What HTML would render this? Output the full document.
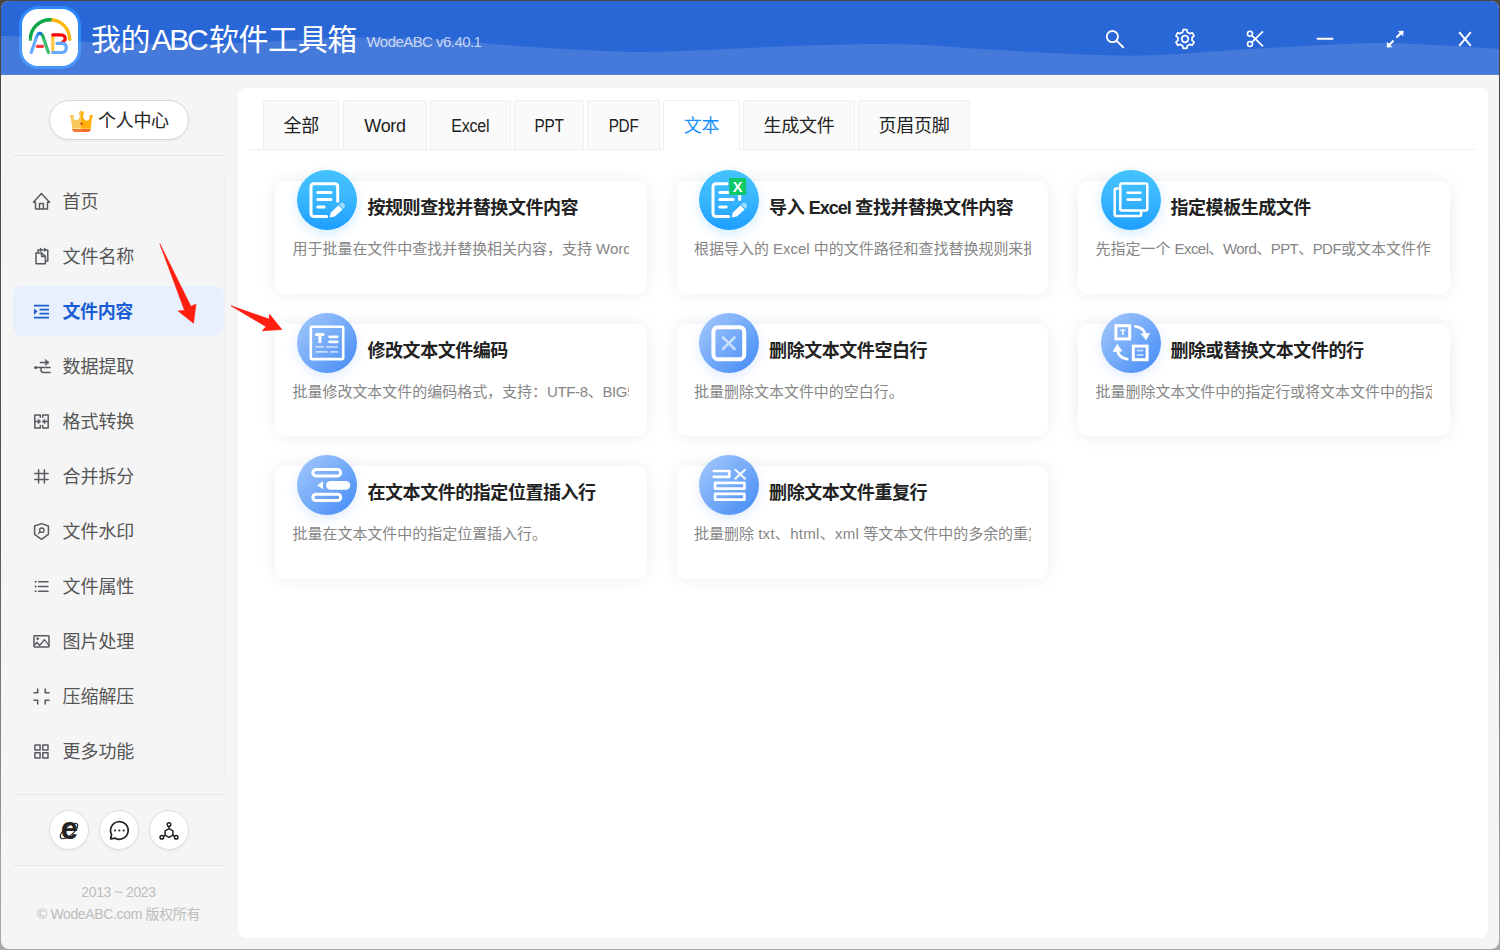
<!DOCTYPE html>
<html lang="zh-CN">
<head>
<meta charset="utf-8">
<title>我的ABC软件工具箱</title>
<style>
*{box-sizing:border-box;margin:0;padding:0}
html,body{width:1500px;height:950px;overflow:hidden}
body{background:linear-gradient(180deg,#4a4740 0%,#55534e 55%,#a2a2a2 92%,#aaa 100%);font-family:"Liberation Sans","Noto Sans CJK SC",sans-serif;position:relative;color:#222}
.win{position:absolute;left:1px;top:1px;width:1498px;height:948px;border-radius:8px;overflow:hidden;background:#f5f5f5}
.in{position:absolute;left:-1px;top:-1px;width:1500px;height:950px}
.abs{position:absolute}
/* header */
.hdr{position:absolute;left:0;top:0;width:1500px;height:74.5px;background:#2966d6;border-bottom:1px solid #336dd8}
.hdr svg.wave{position:absolute;left:0;top:0;pointer-events:none}
.logo{position:absolute;left:19px;top:6px;width:62px;height:63px;border-radius:19px;background:#2e88fc}
.logo i{position:absolute;left:3px;top:3px;right:3px;bottom:3px;border-radius:16px;background:#fff}
.title{position:absolute;left:91px;top:20px;font-size:30px;line-height:40px;color:#fff;white-space:nowrap;letter-spacing:-0.4px}
.ver{position:absolute;left:366.5px;top:32.2px;font-size:15px;line-height:20px;color:#c3d3f3;white-space:nowrap;letter-spacing:-0.55px}
.hi{position:absolute}
/* sidebar */
.pc{position:absolute;left:49px;top:100px;width:140px;height:40px;border:1px solid #d6d6d6;border-radius:20px;background:#fff;box-shadow:0 2px 2px rgba(0,0,0,.03)}
.pc span{position:absolute;left:48px;top:1px;font-size:18px;line-height:38px;color:#222;white-space:nowrap;letter-spacing:-0.3px}
.sep{position:absolute;left:13px;width:212px;height:1px;background:#e6e6e6}
.vline{position:absolute;left:224px;top:171px;width:1px;height:607px;background:#efefef}
.mi{position:absolute;left:13px;width:211px;height:50px;border-radius:9px}
.mi.on{background:#e8f0fe}
.mi span{position:absolute;left:49.5px;top:1.3px;font-size:18px;line-height:50px;color:#555;white-space:nowrap;letter-spacing:-0.05px}
.mi.on span{color:#1a5cd2;font-weight:700;letter-spacing:-0.4px}
.mi svg{position:absolute;left:18px;top:15px;width:20px;height:20px;overflow:visible}
.rb{position:absolute;top:810px;width:40px;height:40px;border-radius:50%;background:#fff;border:1px solid #ddd;box-shadow:0 2px 3px rgba(0,0,0,.04)}
.rb svg{position:absolute;left:-1px;top:-1px;width:40px;height:40px;overflow:visible}
.cp{position:absolute;left:13px;width:211px;text-align:center;font-size:14px;line-height:20px;color:#bdbdbd;white-space:nowrap;letter-spacing:-0.35px}
/* main */
.panel{position:absolute;left:238px;top:88px;width:1250px;height:850px;border-radius:8px;background:#fff}
.tabline{position:absolute;left:250px;top:149px;width:1225px;height:1px;background:#eee}
.tab{position:absolute;top:100px;height:50px;border:1px solid #f0f0f0;border-bottom:1px solid #eee;background:#fafafa;border-radius:3px 3px 0 0;font-size:18px;line-height:50px;text-align:center;color:#222;white-space:nowrap;letter-spacing:-0.3px}
.tab.on{background:#fff;color:#1890ff;border-bottom-color:#fff}
.card{position:absolute;width:372px;height:113px;border-radius:10px;background:#fff;box-shadow:0 0 18px rgba(0,0,0,.075)}
.ic{position:absolute;left:22.3px;top:-11px;width:60px;height:60px;border-radius:50%}
.ic.a{background:linear-gradient(180deg,#43c2ff 0%,#3cb9ff 40%,#1e9fff 100%);box-shadow:0 4px 12px rgba(40,165,255,.2)}
.ic.b{background:linear-gradient(135deg,#a4c9fb 0%,#7aaef9 45%,#4189f6 100%);box-shadow:0 4px 12px rgba(80,145,247,.17)}
.ic svg{position:absolute;left:0;top:0;width:60px;height:60px;overflow:visible}
.ct{position:absolute;left:92.5px;top:13px;font-size:18px;line-height:28px;font-weight:700;color:#222;white-space:nowrap;letter-spacing:-0.45px}
.cd{position:absolute;left:17.5px;top:57px;width:336.5px;overflow:hidden;font-size:15px;line-height:22px;color:#868686;white-space:nowrap;letter-spacing:-0.03px}
.title b{font-weight:400;letter-spacing:-2.2px;margin:0 2.4px 0 1.2px}
.tab s{display:inline-block;text-decoration:none}
.ct s{text-decoration:none;letter-spacing:-1px}
.cd s{text-decoration:none}
</style>
</head>
<body>
<div class="win"><div class="in">

<!-- HEADER -->
<div class="hdr">
<div class="logo"><i></i>
<svg class="abs" style="left:0;top:0" width="62" height="63" viewBox="0 0 62 63" fill="none" stroke-width="3.2" stroke-linecap="round" stroke-linejoin="round">
<path d="M11.4,33.3 A19.6,19.6 0 0 1 32.4,13.75" stroke="#0aa845" stroke-width="3.4"/>
<path d="M32.4,13.75 A19.6,19.6 0 0 1 50.6,33.3" stroke="#fdb70b" stroke-width="3.4" stroke-linecap="butt"/><path d="M50.6,33.2 V33.3" stroke="#fdb70b" stroke-width="3.4"/>
<path d="M12.2,46.6 L17.7,30.4 Q18.6,28.2 20,27.5" stroke="#4a9cff"/>
<path d="M29.4,46.6 L23.9,30.2 Q23,28.2 21.8,27.6" stroke="#1fb35a"/>
<path d="M20,27.5 Q20.9,27.1 21.8,27.6" stroke="#1a74cf"/>
<path d="M18.3,40.3 L23.6,40.3" stroke="#fb1f1f"/>
<path d="M33.8,30 L33.8,46.2" stroke="#fdc02a"/>
<path d="M33.8,28.8 L41.3,28.8 Q46.2,29 46.2,32.6 Q46.2,35.4 43.4,36" stroke="#fa0505"/>
<path d="M38,37.4 L43.2,37.4 Q47.3,37.8 47.3,41.8 Q47.3,46.2 43,46.5 L33.8,46.5" stroke="#4a9cff"/>
</svg>
</div>
<svg class="abs" style="left:0;top:0" width="1500" height="75" viewBox="0 0 1500 75" fill="none" stroke="#fff" stroke-width="1.8" stroke-linecap="round" stroke-linejoin="round">
<circle cx="1112.4" cy="36.6" r="5.6"/><path d="M1116.6,40.9 L1123.2,47.2" stroke-width="2"/>
<path d="M1182.67,32.19 L1183.19,29.57 L1186.81,29.57 L1187.33,32.19 L1189.73,33.57 L1192.26,32.72 L1194.07,35.86 L1192.07,37.61 L1192.07,40.39 L1194.07,42.14 L1192.26,45.28 L1189.73,44.43 L1187.33,45.81 L1186.81,48.43 L1183.19,48.43 L1182.67,45.81 L1180.27,44.43 L1177.74,45.28 L1175.93,42.14 L1177.93,40.39 L1177.93,37.61 L1175.93,35.86 L1177.74,32.72 L1180.27,33.57 Z" stroke-width="1.7"/><circle cx="1185" cy="39" r="3.3" stroke-width="1.7"/>
<circle cx="1250" cy="33.8" r="2.5" stroke-width="1.6"/><circle cx="1250" cy="44" r="2.5" stroke-width="1.6"/><path d="M1252,35.6 L1263,46.4 M1252,42.2 L1263,31.4" stroke-width="1.7" stroke-linecap="butt"/>
<path d="M1316.8,38.8 H1333.2" stroke-width="2" stroke-linecap="butt"/>
<path d="M1396.4,37.6 L1400.6,33.4 M1393.6,40.5 L1389.4,44.7" stroke-width="2.1" stroke-linecap="butt"/>
<path d="M1403.1,31 L1398.3,31.3 L1402.7,35.8 Z M1387,47 L1387.3,42.2 L1391.8,46.7 Z" fill="#fff" stroke-width="0.5"/>
<path d="M1459.2,32.2 L1470.8,45.8 M1470.8,32.2 L1459.2,45.8" stroke-width="1.9" stroke-linecap="butt"/>
</svg>
<div class="title">我的<b>ABC</b>软件工具箱</div>
<div class="ver">WodeABC v6.40.1</div>
<svg class="wave" width="1500" height="76" viewBox="0 0 1500 76"><path d="M0.0,36.0 C3.3,36.1 5.8,35.8 20.0,36.7 C34.2,37.7 63.3,40.5 85.0,41.7 C106.7,42.9 132.5,43.4 150.0,43.9 C167.5,44.4 175.7,44.7 190.0,44.6 C204.3,44.5 218.2,44.1 236.0,43.3 C253.8,42.5 276.3,40.9 297.0,39.9 C317.7,38.9 337.3,37.5 360.0,37.4 C382.7,37.3 411.8,38.5 433.0,39.5 C454.2,40.5 469.2,42.1 487.0,43.5 C504.8,44.9 521.2,46.4 540.0,47.6 C558.8,48.8 583.3,50.1 600.0,50.8 C616.7,51.5 623.3,52.1 640.0,52.0 C656.7,51.9 680.0,51.0 700.0,50.2 C720.0,49.4 743.3,48.1 760.0,47.4 C776.7,46.6 785.0,46.2 800.0,45.7 C815.0,45.2 836.7,44.7 850.0,44.4 C863.3,44.1 868.3,43.9 880.0,44.0 C891.7,44.1 906.7,44.2 920.0,44.8 C933.3,45.4 946.7,46.5 960.0,47.4 C973.3,48.3 985.0,49.1 1000.0,50.0 C1015.0,50.9 1033.3,52.2 1050.0,53.0 C1066.7,53.8 1085.0,54.6 1100.0,55.0 C1115.0,55.4 1126.7,55.8 1140.0,55.6 C1153.3,55.4 1161.7,54.9 1180.0,53.8 C1198.3,52.7 1230.0,50.2 1250.0,49.0 C1270.0,47.8 1283.3,47.2 1300.0,46.3 C1316.7,45.4 1336.7,44.3 1350.0,43.8 C1363.3,43.3 1368.3,43.0 1380.0,43.1 C1391.7,43.2 1406.7,43.6 1420.0,44.2 C1433.3,44.8 1446.7,45.8 1460.0,46.6 C1473.3,47.4 1493.3,48.6 1500.0,49.0 L1500,76 L0,76 Z" fill="#fff" fill-opacity="0.135"/></svg>
</div>

<!-- SIDEBAR -->
<div class="pc"><svg class="abs" style="left:19px;top:9px" width="25" height="23" viewBox="0 0 25 23">
<defs><clipPath id="cl"><rect x="0" y="0" width="12" height="23"/></clipPath></defs>
<g fill="#ffb10a"><path d="M2.1,7.6 L3.4,18.6 H21.8 L22.9,7.6 Q21.6,7 20.6,8.4 Q19.4,11 17.4,10.7 Q15.2,10.4 14,6.6 L13.6,4.5 H11.4 L11,6.6 Q9.8,10.4 7.6,10.7 Q5.6,11 4.4,8.4 Q3.4,7 2.1,7.6 Z"/><circle cx="12.5" cy="3.4" r="2.45"/><circle cx="2.9" cy="6.4" r="1.75"/><circle cx="22.1" cy="6.4" r="1.75"/></g>
<g fill="#f8c85c" clip-path="url(#cl)"><path d="M2.1,7.6 L3.4,18.6 H21.8 L22.9,7.6 Q21.6,7 20.6,8.4 Q19.4,11 17.4,10.7 Q15.2,10.4 14,6.6 L13.6,4.5 H11.4 L11,6.6 Q9.8,10.4 7.6,10.7 Q5.6,11 4.4,8.4 Q3.4,7 2.1,7.6 Z"/><circle cx="12.5" cy="3.4" r="2.45"/><circle cx="2.9" cy="6.4" r="1.75"/></g>
<rect x="3.35" y="18.1" width="18.5" height="1" fill="#ffc43a"/><rect x="3.35" y="18.1" width="8.65" height="1" fill="#fbe2a8"/>
<path d="M3.4,19 H21.8 L21.5,20.3 Q21,22.1 18.8,22.1 H6.4 Q4.2,22.1 3.7,20.3 Z" fill="#f47028"/><path d="M3.4,19 H21.8 L21.5,20.3 Q21,22.1 18.8,22.1 H6.4 Q4.2,22.1 3.7,20.3 Z" fill="#f47a32" clip-path="url(#cl)"/>
<path d="M11,13 Q12.5,12.4 14,13 Q13.8,14.6 12.5,14.7 Q11.2,14.6 11,13 Z" fill="#cc2a1e"/>
</svg><span>个人中心</span></div>
<div class="sep" style="top:155px"></div>
<div class="vline"></div>

<div class="mi" style="top:176px"><svg viewBox="0 0 20 20" fill="none" stroke="#575b60" stroke-width="1.5" stroke-linecap="round" stroke-linejoin="round"><path d="M10.4,2.6 L2.4,11.2 H4.5 V18.1 H16.5 V11.2 H18.6 Z"/><path d="M8.5,18 V12.6 H12.4 V18"/></svg><span>首页</span></div>
<div class="mi" style="top:231px"><svg viewBox="0 0 20 20" fill="none" stroke="#575b60" stroke-width="1.5" stroke-linecap="round" stroke-linejoin="round"><path d="M5,7 H10.6 L14.4,10.4 V17.8 H5 Z"/><path d="M10.6,7 V10.4 H14.4"/><path d="M7,6.6 V4 H16.8 V15 H14.8"/><path d="M9.6,2.6 V5 M13.8,2.6 V5"/></svg><span>文件名称</span></div>
<div class="mi on" style="top:286px"><svg viewBox="0 0 20 20" fill="none" stroke="#1a5cd2" stroke-width="1.6" stroke-linecap="butt"><path d="M3,4.6 H18 M8.5,8.6 H18 M8.5,12.6 H18 M3,16.6 H18"/><path d="M3,7.4 L6.6,10.6 L3,13.8 Z" fill="#1a5cd2" stroke="none"/></svg><span>文件内容</span></div>
<div class="mi" style="top:341px"><svg viewBox="0 0 20 20" fill="none" stroke="#575b60" stroke-width="1.5" stroke-linecap="round" stroke-linejoin="round"><path d="M9.4,6.4 H17.4"/><path d="M14.6,3.6 L18,6.4 L14.6,9.2 Z" fill="#575b60" stroke-width="0.6"/><circle cx="4.7" cy="11.6" r="1.6" fill="#575b60" stroke="none"/><path d="M4.7,11.6 H19"/><path d="M10,11.6 V14 Q10,16.4 12.4,16.4 H19"/></svg><span>数据提取</span></div>
<div class="mi" style="top:396px"><svg viewBox="0 0 20 20" fill="none" stroke="#575b60" stroke-width="1.5" stroke-linecap="round" stroke-linejoin="round"><path d="M9.3,6.2 V3.9 H3.8 V17 H9.3 V14.6"/><path d="M11.7,6.2 V3.9 H17.2 V17 H11.7 V14.6"/><path d="M3.8,10.45 H8"/><path d="M17.2,10.45 H13"/><path d="M7.2,8 L10,10.45 L7.2,12.9 Z M13.8,8 L11,10.45 L13.8,12.9 Z" fill="#575b60" stroke-width="0.4"/></svg><span>格式转换</span></div>
<div class="mi" style="top:451px"><svg viewBox="0 0 20 20" fill="none" stroke="#575b60" stroke-width="1.5" stroke-linecap="round" stroke-linejoin="round"><path d="M7.6,3.8 V17 M13.4,3.8 V17 M3.8,7.4 H17.2 M3.8,13.5 H17.2"/></svg><span>合并拆分</span></div>
<div class="mi" style="top:506px"><svg viewBox="0 0 20 20" fill="none" stroke="#575b60" stroke-width="1.5" stroke-linecap="round" stroke-linejoin="round"><path d="M10.5,2.6 L17.4,5 V13.3 L10.5,18.3 L3.6,13.3 V5 Z"/><circle cx="10.8" cy="9.2" r="2.2" stroke-width="1.3"/><path d="M9.2,10.8 L7.4,12.6" stroke-width="1.3"/></svg><span>文件水印</span></div>
<div class="mi" style="top:561px"><svg viewBox="0 0 20 20" fill="none" stroke="#575b60" stroke-width="1.5" stroke-linecap="round" stroke-linejoin="round"><path d="M7.6,5.8 H17 M7.6,10.5 H17 M7.6,15.2 H17"/><path d="M4.6,5.8 H4.7 M4.6,10.5 H4.7 M4.6,15.2 H4.7" stroke-width="1.9"/></svg><span>文件属性</span></div>
<div class="mi" style="top:616px"><svg viewBox="0 0 20 20" fill="none" stroke="#575b60" stroke-width="1.5" stroke-linecap="round" stroke-linejoin="round"><rect x="3" y="4.8" width="15" height="11.1" rx="0.6"/><circle cx="6.6" cy="7.7" r="1" fill="#575b60" stroke-width="0.8"/><path d="M3.2,14.3 L6,11.3 L8.6,14.5 L13.4,8.6 L17.9,14.3" stroke-width="1.3"/></svg><span>图片处理</span></div>
<div class="mi" style="top:671px"><svg viewBox="0 0 20 20" fill="none" stroke="#575b60" stroke-width="1.5" stroke-linecap="round" stroke-linejoin="round" stroke-width="1.6"><path d="M6.7,3 V6.7 H3 M14.2,3 V6.7 H18 M3,14.2 H6.7 V17.9 M18,14.2 H14.2 V17.9"/></svg><span>压缩解压</span></div>
<div class="mi" style="top:726px"><svg viewBox="0 0 20 20" fill="none" stroke="#575b60" stroke-width="1.5" stroke-linecap="round" stroke-linejoin="round" stroke-linejoin="miter"><rect x="3.9" y="3.9" width="5.2" height="5.2"/><rect x="11.8" y="3.9" width="5.2" height="5.2"/><rect x="3.9" y="11.8" width="5.2" height="5.2"/><rect x="11.8" y="11.8" width="5.2" height="5.2"/></svg><span>更多功能</span></div>

<div class="sep" style="top:794px"></div>
<div class="rb" style="left:49px"><svg viewBox="0 0 40 40"><text x="20.4" y="29.3" font-family="Liberation Sans,sans-serif" font-size="31" font-weight="700" text-anchor="middle" fill="#222">e</text><ellipse cx="20" cy="21" rx="10.8" ry="4.4" transform="rotate(-40 20 21)" fill="none" stroke="#222" stroke-width="1.1"/></svg></div>
<div class="rb" style="left:99px"><svg viewBox="0 0 40 40" fill="none" stroke="#222" stroke-width="1.7" stroke-linejoin="round" stroke-linecap="round"><path d="M11.6,28.8 L12.6,24.6 A8.8,8.8 0 1 1 16.2,28.2 Z"/><path d="M16,20.5 H16.1 M20.3,20.5 H20.4 M24.6,20.5 H24.7" stroke-width="2"/></svg></div>
<div class="rb" style="left:149px"><svg viewBox="0 0 40 40" fill="none" stroke="#222" stroke-width="1.5" stroke-linejoin="round"><path d="M20,18.6 L23.9,20.8 V25.2 L20,27.4 L16.1,25.2 V20.8 Z"/><path d="M20,18.6 V16.4 M23.9,25.2 L25.6,26.3 M16.1,25.2 L14.4,26.3"/><circle cx="20" cy="14.6" r="1.8"/><circle cx="27.2" cy="27.2" r="1.8"/><circle cx="12.8" cy="27.2" r="1.8"/></svg></div>
<div class="sep" style="top:865px"></div>
<div class="cp" style="top:882px">2013 ~ 2023</div>
<div class="cp" style="top:904px">© WodeABC.com 版权所有</div>

<!-- MAIN -->
<div class="panel"></div>
<div class="tabline"></div>
<div class="tab" style="left:263.3px;width:76px">全部</div>
<div class="tab" style="left:343.3px;width:83.5px">Word</div>
<div class="tab" style="left:430.2px;width:80.4px"><s style="transform:scaleX(.89)">Excel</s></div>
<div class="tab" style="left:513.5px;width:70.5px"><s style="transform:scaleX(.85)">PPT</s></div>
<div class="tab" style="left:587.2px;width:72.5px"><s style="transform:scaleX(.85)">PDF</s></div>
<div class="tab on" style="left:663.4px;width:76.2px">文本</div>
<div class="tab" style="left:743.2px;width:111.5px">生成文件</div>
<div class="tab" style="left:858px;width:112px">页眉页脚</div>

<div class="card" style="left:275px;top:181px"><div class="ic a"><svg viewBox="0 0 60 60" fill="none" stroke="#fff" stroke-linecap="round" stroke-linejoin="round"><path d="M40.7,31.2 V16.8 Q40.7,13.7 37.6,13.7 H17.1 Q14,13.7 14,16.8 V43.3 Q14,46.4 17.1,46.4 H29.6" stroke-width="3"/><path d="M20.8,22.4 H34 M20.8,29.6 H34 M20.8,37.1 H27.2" stroke-width="3"/><path d="M32.6,47.5 L33.9,42.4 L41.6,35.2 L45.6,39.4 L37.8,46.5 Z" fill="#fff" stroke="none"/><path d="M42.2,34.6 L43.3,33.6 Q45.4,32 47.2,33.9 Q49,35.9 47.3,37.8 L46.2,38.8 Z" fill="#fff" fill-opacity="0.55" stroke="none"/></svg></div><div class="ct">按规则查找并替换文件内容</div><div class="cd">用于批量在文件中查找并替换相关内容，支持 Word、Excel、PPT、PDF、TXT 等格式</div></div>
<div class="card" style="left:676.6px;width:371.6px;top:181px"><div class="ic a"><svg viewBox="0 0 60 60" fill="none" stroke="#fff" stroke-linecap="round" stroke-linejoin="round"><path d="M28,13.7 H17.1 Q14,13.7 14,16.8 V43.3 Q14,46.4 17.1,46.4 H29.6" stroke-width="3"/><path d="M40.7,26 V29.4" stroke-width="3"/><path d="M20.8,22.4 H29 M20.8,29.6 H34 M20.8,37.1 H27.2" stroke-width="3"/><path d="M32.6,47.5 L33.9,42.4 L41.6,35.2 L45.6,39.4 L37.8,46.5 Z" fill="#fff" stroke="none"/><path d="M42.2,34.6 L43.3,33.6 Q45.4,32 47.2,33.9 Q49,35.9 47.3,37.8 L46.2,38.8 Z" fill="#fff" fill-opacity="0.55" stroke="none"/><rect x="30.2" y="8" width="17" height="17" rx="1.2" fill="#0cc866" stroke="none"/><text x="38.7" y="22" font-family="Liberation Sans,sans-serif" font-size="14.5" font-weight="700" text-anchor="middle" fill="#fff" stroke="none">X</text></svg></div><div class="ct">导入 <s>Excel</s> 查找并替换文件内容</div><div class="cd">根据导入的 Excel 中的文件路径和查找替换规则来批量查找并替换文件内容</div></div>
<div class="card" style="left:1078px;top:181px"><div class="ic a" style="left:22.8px"><svg viewBox="0 0 60 60" fill="none" stroke="#fff" stroke-linecap="round" stroke-linejoin="round" stroke-linejoin="round"><path d="M18,18.6 H15.2 Q13.7,18.6 13.7,20.1 V44.4 Q13.7,45.9 15.2,45.9 H38.6 Q40.1,45.9 40.1,44.4 V42" stroke-width="2.5"/><rect x="19.3" y="13.4" width="27" height="27.2" rx="1.5" stroke-width="2.5"/><path d="M26.6,22.7 H39.4 M26.6,29.6 H39.4" stroke-width="2.6"/></svg></div><div class="ct">指定模板生成文件</div><div class="cd">先指定一个 <s style="letter-spacing:-.55px">Excel、Word、PPT、PDF</s>或文本文件作为模板，再批量生成文件</div></div>

<div class="card" style="left:275px;top:324px;height:112px"><div class="ic b"><svg viewBox="0 0 60 60" fill="none" stroke="#fff" stroke-linecap="round" stroke-linejoin="round"><rect x="13.8" y="13.7" width="32.4" height="32.4" rx="1" stroke-width="2.6" stroke-linejoin="miter"/><path d="M18.4,21.6 H27.4 M22.9,21.6 V30" stroke-width="3" stroke-linecap="butt"/><path d="M32.6,23.8 H40.2 M32.6,28.8 H40.2" stroke-width="2.8"/><path d="M19.4,33.9 H26 M29.6,33.9 H40.4 M19.4,38.9 H30 M33.6,38.9 H40.4" stroke-width="1.9" stroke-opacity="0.6"/></svg></div><div class="ct">修改文本文件编码</div><div class="cd">批量修改文本文件的编码格式，支持：<s style="letter-spacing:-.35px">UTF-8、BIG5、GBK</s> 等多种编码</div></div>
<div class="card" style="left:676.6px;width:371.6px;top:324px;height:112px"><div class="ic b"><svg viewBox="0 0 60 60" fill="none" stroke="#fff" stroke-linecap="round" stroke-linejoin="round"><rect x="14.4" y="14.2" width="30.8" height="32" rx="4.5" stroke-width="4"/><path d="M24,24.4 L35.6,36 M35.6,24.4 L24,36" stroke-width="2.6" stroke-opacity="0.62"/></svg></div><div class="ct">删除文本文件空白行</div><div class="cd">批量删除文本文件中的空白行。</div></div>
<div class="card" style="left:1078px;top:324px;height:112px"><div class="ic b" style="left:22.8px"><svg viewBox="0 0 60 60" fill="none" stroke="#fff" stroke-linecap="round" stroke-linejoin="round"><rect x="14.9" y="12.7" width="13.8" height="13.2" stroke-width="3" stroke-linejoin="miter"/><rect x="32.3" y="33.1" width="13.8" height="13.6" stroke-width="3" stroke-linejoin="miter"/><path d="M19.4,17.2 H24.2 M21.8,17.2 V22" stroke-width="1.5" stroke-linecap="butt"/><path d="M36.6,37.6 H41.8 M36.6,42 H41.8" stroke-width="2" stroke-opacity="0.6"/><path d="M34.4,13.4 Q43.4,14.6 44.6,22.6" stroke-width="2.8" stroke-linecap="round"/><path d="M40.6,20.8 L48.6,20.4 L45.1,26.6 Z" fill="#fff" stroke-width="0.8"/><path d="M26.2,46.2 Q17.2,45 16.4,36.4" stroke-width="2.8"/><path d="M12.4,38.2 L16.2,31.4 L20.6,37.8 Z" fill="#fff" stroke-width="0.8"/></svg></div><div class="ct">删除或替换文本文件的行</div><div class="cd">批量删除文本文件中的指定行或将文本文件中的指定行替换为新的内容</div></div>

<div class="card" style="left:275px;top:466px"><div class="ic b"><svg viewBox="0 0 60 60" fill="none" stroke="#fff" stroke-linecap="round" stroke-linejoin="round"><rect x="15.8" y="14.6" width="27.9" height="6.4" rx="3.2" stroke-width="3"/><rect x="15.8" y="39.2" width="27.9" height="6.4" rx="3.2" stroke-width="3"/><rect x="29.1" y="26.1" width="24.1" height="8.7" rx="4.3" fill="#fff" stroke="none"/><path d="M20.2,30.3 L26,26.2 V34.3 Z" fill="#fff" stroke="none"/></svg></div><div class="ct">在文本文件的指定位置插入行</div><div class="cd">批量在文本文件中的指定位置插入行。</div></div>
<div class="card" style="left:676.6px;width:371.6px;top:466px"><div class="ic b"><svg viewBox="0 0 60 60" fill="none" stroke="#fff" stroke-linecap="round" stroke-linejoin="round" stroke-linejoin="miter" stroke-linecap="butt"><path d="M14.8,16 H30.2 V21.9 H14.8" stroke-width="2.7"/><rect x="16.1" y="27.9" width="29.3" height="5.8" stroke-width="2.7"/><rect x="16.1" y="38.9" width="29.3" height="5.8" stroke-width="2.7"/><path d="M36.4,14.8 L46,23.6 M46,14.8 L36.4,23.6" stroke-width="2.2" stroke-opacity="0.9"/></svg></div><div class="ct">删除文本文件重复行</div><div class="cd">批量删除 <s style="letter-spacing:.3px">txt、html、xml</s> 等文本文件中的多余的重复行，只保留一行</div></div>

<!-- red arrows -->
<svg class="abs" style="left:0;top:0;pointer-events:none" width="1500" height="950" viewBox="0 0 1500 950">
<polygon stroke="#ff1e10" stroke-width="0.7" stroke-linejoin="round" points="159.9,243.9 190.9,306.4 195.9,304.1 193.5,323.2 178.2,311 184.6,310.4" fill="#ff1e10"/>
<polygon stroke="#ff1e10" stroke-width="0.7" stroke-linejoin="round" points="230.9,305.8 269,319.1 269.6,314.3 281.8,329.5 262.1,330.7 266.2,326.7" fill="#ff1e10"/>
</svg>

</div></div>
</body>
</html>
